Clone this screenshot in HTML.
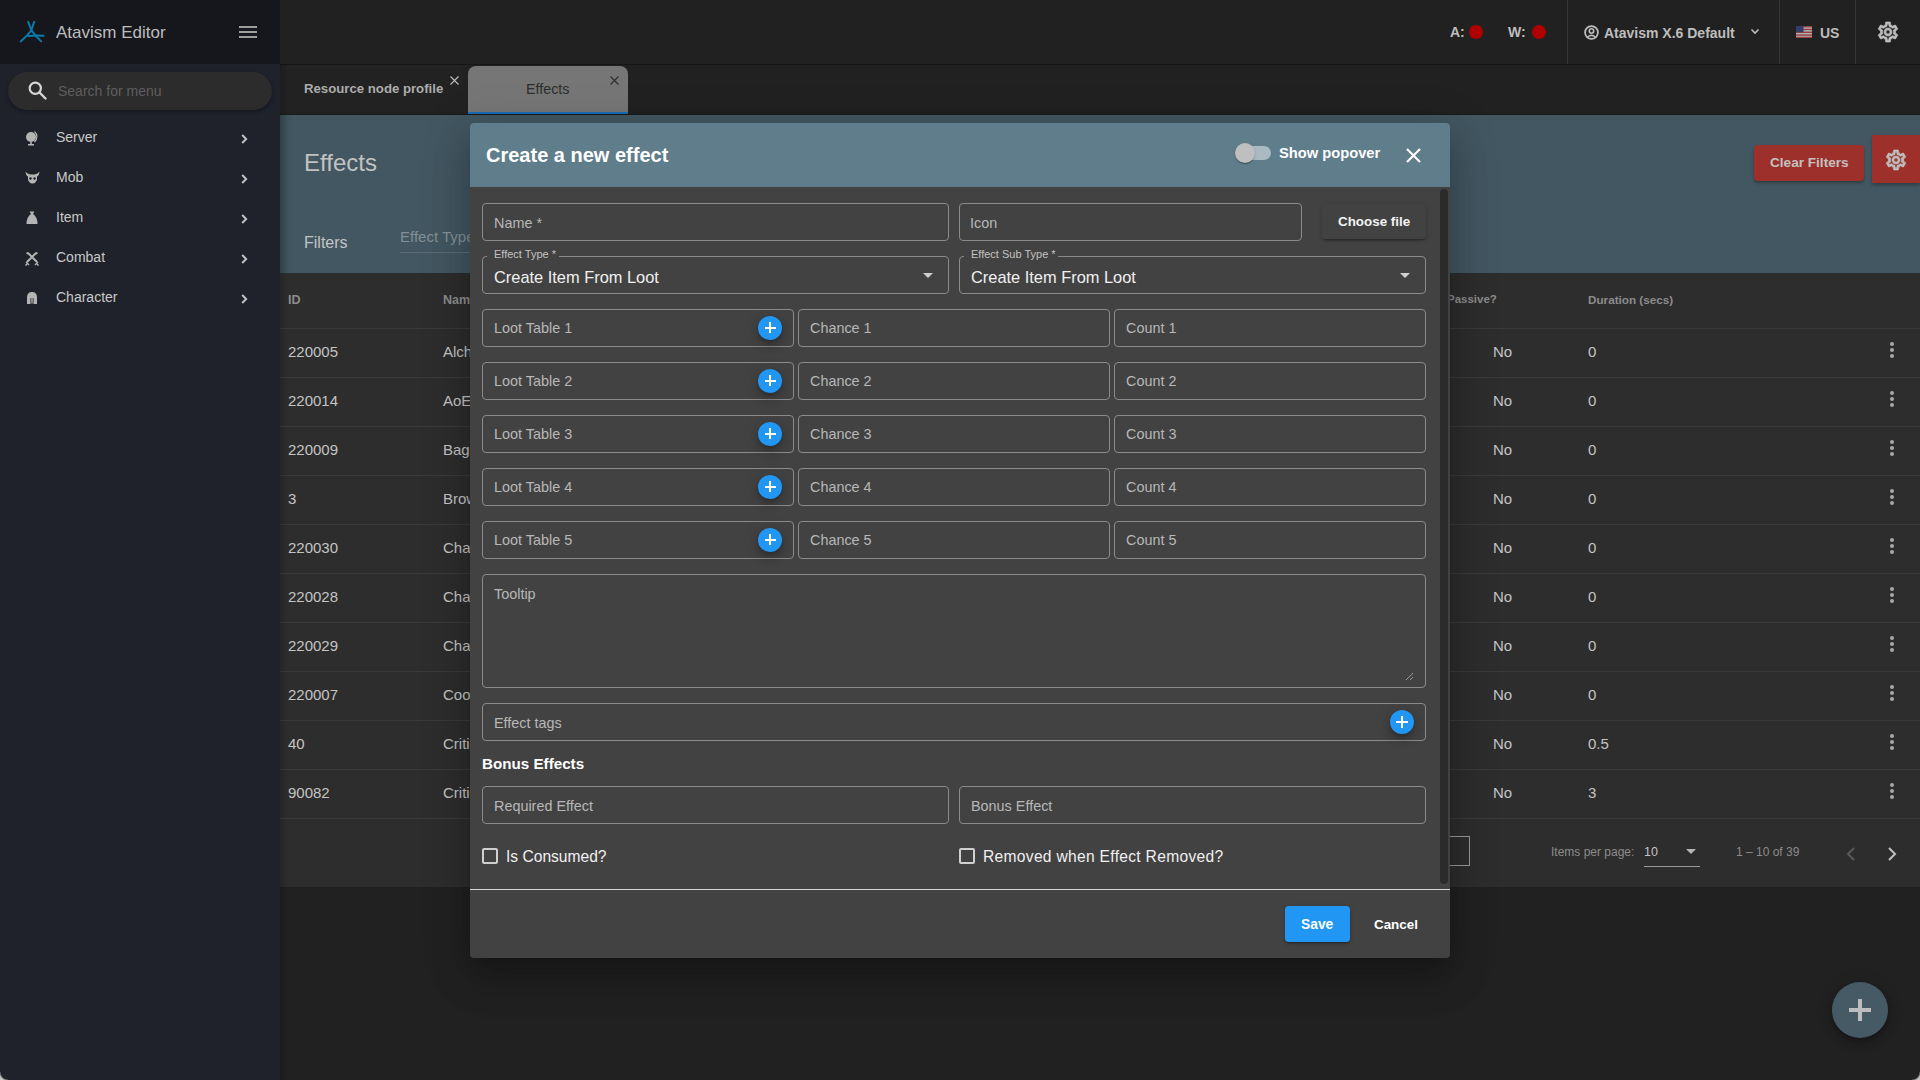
<!DOCTYPE html>
<html><head><meta charset="utf-8">
<style>
*{box-sizing:border-box;margin:0;padding:0}
html,body{width:1920px;height:1080px;overflow:hidden;background:#212121;font-family:"Liberation Sans",sans-serif}
.a{position:absolute}
.t{position:absolute;white-space:nowrap;line-height:1}
#sb{left:0;top:0;width:280px;height:1080px;background:#1f222b}
#sbh{left:0;top:0;width:280px;height:64px;background:#16171d}
#hdr{left:280px;top:0;width:1640px;height:65px;background:#212121;border-bottom:1px solid #161616}
#tabs{left:280px;top:65px;width:1640px;height:50px;background:#212121;border-bottom:1px solid #1a1a1a}
#ch{left:280px;top:115px;width:1640px;height:158px;background:linear-gradient(90deg,#3b4e57 0px,#425761 14px,#425761 100%)}
#tbl{left:280px;top:273px;width:1640px;height:614px;background:#2d2d2d}
.rl{position:absolute;left:280px;width:1640px;height:1px;background:#393939}
.cell{position:absolute;font-size:15px;color:#c4c4c4;line-height:1;white-space:nowrap}
.keb{position:absolute;width:4px;height:4px;border-radius:50%;background:#a8a8a8}
.sep{position:absolute;top:0;width:1px;height:64px;background:#363636}
.mi{position:absolute;left:56px;font-size:14px;color:#c9c9c9;line-height:1;white-space:nowrap}
.chev{position:absolute;left:240px;width:7px;height:7px;border-right:2px solid #c0c0c0;border-top:2px solid #c0c0c0;transform:rotate(45deg)}
.ico{position:absolute;left:25px}
</style></head><body>
<!-- SIDEBAR -->
<div id="sb" class="a"></div>
<div id="sbh" class="a"></div>
<svg class="a" style="left:16px;top:17px" width="32" height="28" viewBox="0 0 32 28">
  <g stroke="#0a7bab" stroke-width="2" fill="none" stroke-linecap="round" stroke-linejoin="round">
  <path d="M12.2 4.9 L15.3 13"/>
  <path d="M18.2 4.9 L15.3 13 L19.7 18.9 L25.2 24.4"/>
  <path d="M15.3 13.5 Q11 19 4.7 24.4"/>
  <path d="M12.2 18.9 Q20 18.2 27.5 18.7"/>
  </g>
</svg>
<div class="t" style="left:56px;top:24px;font-size:17px;color:#bdbdbd">Atavism Editor</div>
<div class="a" style="left:239px;top:26px;width:18px;height:2px;background:#9e9e9e"></div>
<div class="a" style="left:239px;top:31px;width:18px;height:2px;background:#9e9e9e"></div>
<div class="a" style="left:239px;top:36px;width:18px;height:2px;background:#9e9e9e"></div>

<div class="a" style="left:8px;top:72px;width:264px;height:38px;border-radius:19px;background:#2c2c2c;box-shadow:0 2px 4px rgba(0,0,0,.35)"></div>
<svg class="a" style="left:28px;top:81px" width="19" height="19" viewBox="0 0 19 19">
  <circle cx="7.3" cy="7.3" r="5.6" stroke="#d6d6d6" stroke-width="2.2" fill="none"/>
  <path d="M11.5 11.5 L17.5 17.5" stroke="#d6d6d6" stroke-width="2.4" stroke-linecap="round"/>
</svg>
<div class="t" style="left:58px;top:84px;font-size:14px;color:#5e5e5e">Search for menu</div>

<!-- menu icons -->
<svg class="ico" style="top:131px" width="14" height="15" viewBox="0 0 14 15"><circle cx="6" cy="6" r="5" fill="#b4b4b4"/><path d="M9.5 0.5 A7 7 0 0 1 9.5 11" stroke="#b4b4b4" stroke-width="1.2" fill="none"/><rect x="5.2" y="11" width="1.6" height="2" fill="#b4b4b4"/><rect x="3" y="13" width="6" height="1.5" fill="#b4b4b4"/></svg>
<svg class="ico" style="top:171px" width="15" height="13" viewBox="0 0 15 13"><path d="M0.5 0.5 Q1 5 3 5.5 L3 9 Q5 13 7.5 12.5 Q10 13 12 9 L12 5.5 Q14 5 14.5 0.5 Q12 4 7.5 3.5 Q3 4 0.5 0.5Z" fill="#b4b4b4"/><circle cx="5.5" cy="7.5" r="1.2" fill="#1e2029"/><circle cx="9.5" cy="7.5" r="1.2" fill="#1e2029"/></svg>
<svg class="ico" style="top:211px" width="14" height="14" viewBox="0 0 14 14"><path d="M4.5 0.5 L9.5 0.5 L8 3 Q12.5 6 12.5 13 L1.5 13 Q1.5 6 6 3Z" fill="#b4b4b4"/></svg>
<svg class="ico" style="top:252px" width="14" height="14" viewBox="0 0 14 14"><path d="M1.5 1 L3.5 1.5 L12 10 M12.5 1 L10.5 1.5 L2 10" stroke="#b4b4b4" stroke-width="2" fill="none"/><path d="M1 10 L4 13 M13 10 L10 13" stroke="#b4b4b4" stroke-width="1.5"/><path d="M0.5 13.5 L2 12 M13.5 13.5 L12 12" stroke="#b4b4b4" stroke-width="1.5"/></svg>
<svg class="ico" style="left:27px;top:292px" width="10" height="12" viewBox="0 0 10 12"><path d="M5 0 Q10 0 10 5.5 L10 12 L6.5 12 L6.5 6 L3.5 6 L3.5 12 L0 12 L0 5.5 Q0 0 5 0Z" fill="#b4b4b4"/><rect x="4.3" y="5.5" width="1.4" height="6" fill="#b4b4b4"/></svg>

<div class="mi" style="top:130px">Server</div>
<div class="mi" style="top:170px">Mob</div>
<div class="mi" style="top:210px">Item</div>
<div class="mi" style="top:250px">Combat</div>
<div class="mi" style="top:290px">Character</div>
<svg class="a" style="left:241px;top:134px" width="7" height="10" viewBox="0 0 7 10"><path d="M1.2 1 L5.2 5 L1.2 9" stroke="#c4c4c4" stroke-width="1.9" fill="none"/></svg>
<svg class="a" style="left:241px;top:174px" width="7" height="10" viewBox="0 0 7 10"><path d="M1.2 1 L5.2 5 L1.2 9" stroke="#c4c4c4" stroke-width="1.9" fill="none"/></svg>
<svg class="a" style="left:241px;top:214px" width="7" height="10" viewBox="0 0 7 10"><path d="M1.2 1 L5.2 5 L1.2 9" stroke="#c4c4c4" stroke-width="1.9" fill="none"/></svg>
<svg class="a" style="left:241px;top:254px" width="7" height="10" viewBox="0 0 7 10"><path d="M1.2 1 L5.2 5 L1.2 9" stroke="#c4c4c4" stroke-width="1.9" fill="none"/></svg>
<svg class="a" style="left:241px;top:294px" width="7" height="10" viewBox="0 0 7 10"><path d="M1.2 1 L5.2 5 L1.2 9" stroke="#c4c4c4" stroke-width="1.9" fill="none"/></svg>

<!-- HEADER -->
<div id="hdr" class="a"></div>
<div class="t" style="left:1450px;top:25px;font-size:14px;font-weight:700;color:#bdbdbd">A:</div>
<div class="a" style="left:1469px;top:25px;width:14px;height:14px;border-radius:50%;background:#b10000"></div>
<div class="t" style="left:1508px;top:25px;font-size:14px;font-weight:700;color:#bdbdbd">W:</div>
<div class="a" style="left:1532px;top:25px;width:14px;height:14px;border-radius:50%;background:#b10000"></div>
<div class="sep" style="left:1567px"></div>
<svg class="a" style="left:1584px;top:25px" width="15" height="15" viewBox="0 0 15 15"><circle cx="7.5" cy="7.5" r="6.4" stroke="#bdbdbd" stroke-width="1.8" fill="none"/><circle cx="7.5" cy="6" r="2.2" stroke="#bdbdbd" stroke-width="1.6" fill="none"/><path d="M3.6 12 Q7.5 8.8 11.4 12" stroke="#bdbdbd" stroke-width="1.6" fill="none"/></svg>
<div class="t" style="left:1604px;top:26px;font-size:14px;font-weight:700;color:#bdbdbd">Atavism X.6 Default</div>
<svg class="a" style="left:1750px;top:28px" width="10" height="7" viewBox="0 0 10 7"><path d="M1.5 1.5 L5 5 L8.5 1.5" stroke="#bdbdbd" stroke-width="1.6" fill="none"/></svg>
<div class="sep" style="left:1779px"></div>
<svg class="a" style="left:1796px;top:26px" width="16" height="12" viewBox="0 0 16 12"><rect width="16" height="12" fill="#b0b0b0"/><rect y="0" width="16" height="1.4" fill="#9a4040"/><rect y="2.8" width="16" height="1.4" fill="#9a4040"/><rect y="5.6" width="16" height="1.4" fill="#9a4040"/><rect y="8.4" width="16" height="1.4" fill="#9a4040"/><rect y="10.8" width="16" height="1.2" fill="#9a4040"/><rect width="7.5" height="6.2" fill="#343c6a"/></svg>
<div class="t" style="left:1820px;top:26px;font-size:14px;font-weight:700;color:#bdbdbd">US</div>
<div class="sep" style="left:1855px"></div>
<svg class="a" style="left:1876px;top:19.5px" width="24" height="24" viewBox="0 0 24 24"><path fill="#bdbdbd" stroke="#bdbdbd" stroke-width="0.7" d="M19.43 12.98c.04-.32.07-.64.07-.98 0-.34-.03-.66-.07-.98l2.11-1.65c.19-.15.24-.42.12-.64l-2-3.46c-.09-.16-.26-.25-.44-.25-.06 0-.12.01-.17.03l-2.49 1c-.52-.4-1.08-.73-1.69-.98l-.38-2.65C14.46 2.18 14.25 2 14 2h-4c-.25 0-.46.18-.49.42l-.38 2.65c-.61.25-1.17.59-1.69.98l-2.49-1c-.06-.02-.12-.03-.18-.03-.17 0-.34.09-.43.25l-2 3.46c-.13.22-.07.49.12.64l2.11 1.650c-.04.32-.07.65-.07.98 0 .33.03.66.07.98l-2.11 1.65c-.19.15-.24.42-.12.64l2 3.46c.09.16.26.25.44.25.06 0 .12-.01.17-.03l2.49-1c.52.4 1.08.73 1.69.98l.38 2.65c.03.24.24.42.49.42h4c.25 0 .46-.18.49-.42l.38-2.65c.61-.25 1.17-.59 1.69-.98l2.49 1c.06.02.12.03.18.03.17 0 .34-.09.43-.25l2-3.46c.12-.22.07-.49-.12-.64l-2.11-1.65zm-1.98-1.71c.04.31.05.52.05.73 0 .21-.02.43-.05.73l-.14 1.13.89.7 1.08.84-.7 1.21-1.27-.51-1.04-.42-.9.68c-.43.32-.84.56-1.25.73l-1.06.43-.16 1.13-.2 1.35h-1.4l-.19-1.35-.16-1.13-1.06-.43c-.43-.18-.83-.41-1.23-.71l-.91-.7-1.06.43-1.27.51-.7-1.21 1.08-.84.89-.7-.14-1.13c-.03-.31-.05-.54-.05-.74s.02-.43.05-.73l.14-1.13-.89-.7-1.08-.84.7-1.21 1.27.51 1.04.42.9-.68c.43-.32.84-.56 1.250-.73l1.06-.43.16-1.13.2-1.35h1.39l.19 1.35.16 1.13 1.06.43c.43.18.83.41 1.23.71l.91.7 1.06-.43 1.27-.51.7 1.21-1.07.85-.89.7.14 1.13zM12 8c-2.21 0-4 1.79-4 4s1.79 4 4 4 4-1.79 4-4-1.79-4-4-4zm0 6c-1.1 0-2-.9-2-2s.9-2 2-2 2 .9 2 2-.9 2-2 2z"/></svg>

<!-- TABS -->
<div id="tabs" class="a"></div>
<div class="a" style="left:280px;top:66px;width:187px;height:47px;background:#222222;border-radius:8px 8px 0 0;box-shadow:inset 1px 1px 0 rgba(255,255,255,.02)"></div>
<div class="t" style="left:304px;top:82px;font-size:13.2px;font-weight:700;color:#acacac">Resource node profile</div>
<svg class="a" style="left:450px;top:76px" width="9" height="9" viewBox="0 0 9 9"><path d="M0.5 0.5 L8.5 8.5 M8.5 0.5 L0.5 8.5" stroke="#bbb" stroke-width="1.1"/></svg>
<div class="a" style="left:468px;top:66px;width:160px;height:48px;background:#767676;border-radius:8px 8px 0 0;border-bottom:2px solid #1a6cb5"></div>
<div class="t" style="left:526px;top:82px;font-size:14.3px;color:#2e2e2e">Effects</div>
<svg class="a" style="left:610px;top:76px" width="9" height="9" viewBox="0 0 9 9"><path d="M0.5 0.5 L8.5 8.5 M8.5 0.5 L0.5 8.5" stroke="#2e2e2e" stroke-width="1.1"/></svg>

<!-- CONTENT HEADER -->
<div id="ch" class="a"></div>
<div class="t" style="left:304px;top:151px;font-size:24px;color:#c2c2c2">Effects</div>
<div class="t" style="left:304px;top:235px;font-size:16px;color:#c4c4c4">Filters</div>
<div class="t" style="left:400px;top:229px;font-size:15px;color:#838f95">Effect Type</div>
<div class="a" style="left:400px;top:252px;width:200px;height:1px;background:#5c6c74"></div>
<div class="a" style="left:1754px;top:145px;width:110px;height:36px;border-radius:4px;background:#9d302a;box-shadow:0 2px 3px rgba(0,0,0,.3)"></div>
<div class="t" style="left:1770px;top:156px;font-size:13.6px;font-weight:700;color:#c2c2c2">Clear Filters</div>
<div class="a" style="left:1872px;top:135px;width:48px;height:48px;background:#9d302a;box-shadow:0 2px 3px rgba(0,0,0,.3)"></div>
<svg class="a" style="left:1884px;top:147.5px" width="24" height="24" viewBox="0 0 24 24"><path fill="#bdbdbd" stroke="#bdbdbd" stroke-width="0.7" d="M19.43 12.98c.04-.32.07-.64.07-.98 0-.34-.03-.66-.07-.98l2.11-1.65c.19-.15.24-.42.12-.64l-2-3.46c-.09-.16-.26-.25-.44-.25-.06 0-.12.01-.17.03l-2.49 1c-.52-.4-1.08-.73-1.69-.98l-.38-2.65C14.46 2.18 14.25 2 14 2h-4c-.25 0-.46.18-.49.42l-.38 2.65c-.61.25-1.17.59-1.69.98l-2.49-1c-.06-.02-.12-.03-.18-.03-.17 0-.34.09-.43.25l-2 3.46c-.13.22-.07.49.12.64l2.11 1.650c-.04.32-.07.65-.07.98 0 .33.03.66.07.98l-2.11 1.65c-.19.15-.24.42-.12.64l2 3.46c.09.16.26.25.44.25.06 0 .12-.01.17-.03l2.49-1c.52.4 1.08.73 1.69.98l.38 2.65c.03.24.24.42.49.42h4c.25 0 .46-.18.49-.42l.38-2.65c.61-.25 1.17-.59 1.69-.98l2.49 1c.06.02.12.03.18.03.17 0 .34-.09.43-.25l2-3.46c.12-.22.07-.49-.12-.64l-2.11-1.65zm-1.98-1.71c.04.31.05.52.05.73 0 .21-.02.43-.05.73l-.14 1.13.89.7 1.08.84-.7 1.21-1.27-.51-1.04-.42-.9.68c-.43.32-.84.56-1.25.73l-1.06.43-.16 1.13-.2 1.35h-1.4l-.19-1.35-.16-1.13-1.06-.43c-.43-.18-.83-.41-1.23-.71l-.91-.7-1.06.43-1.27.51-.7-1.21 1.08-.84.89-.7-.14-1.13c-.03-.31-.05-.54-.05-.74s.02-.43.05-.73l.14-1.13-.89-.7-1.08-.84.7-1.21 1.27.51 1.04.42.9-.68c.43-.32.84-.56 1.250-.73l1.06-.43.16-1.13.2-1.35h1.39l.19 1.35.16 1.13 1.06.43c.43.18.83.41 1.23.71l.91.7 1.06-.43 1.27-.51.7 1.21-1.07.85-.89.7.14 1.13zM12 8c-2.21 0-4 1.79-4 4s1.79 4 4 4 4-1.79 4-4-1.79-4-4-4zm0 6c-1.1 0-2-.9-2-2s.9-2 2-2 2 .9 2 2-.9 2-2 2z"/></svg>

<!-- TABLE -->
<div id="tbl" class="a"></div>
<div class="t" style="left:288px;top:294px;font-size:12.5px;font-weight:700;color:#8c8c8c">ID</div>
<div class="t" style="left:443px;top:294px;font-size:12.5px;font-weight:700;color:#8c8c8c">Name</div>
<div class="t" style="left:1447px;top:294px;font-size:11.5px;font-weight:700;color:#8c8c8c">Passive?</div>
<div class="t" style="left:1588px;top:294px;font-size:11.7px;font-weight:700;color:#8c8c8c">Duration (secs)</div>
<div class="rl" style="top:328px"></div>
<div class="cell" style="left:288px;top:344px">220005</div>
<div class="cell" style="left:443px;top:344px">Alchemy</div>
<div class="cell" style="left:1493px;top:344px">No</div>
<div class="cell" style="left:1588px;top:344px">0</div>
<div class="keb" style="left:1890px;top:342px"></div>
<div class="keb" style="left:1890px;top:348px"></div>
<div class="keb" style="left:1890px;top:354px"></div>
<div class="rl" style="top:377px"></div>
<div class="cell" style="left:288px;top:393px">220014</div>
<div class="cell" style="left:443px;top:393px">AoE Damage</div>
<div class="cell" style="left:1493px;top:393px">No</div>
<div class="cell" style="left:1588px;top:393px">0</div>
<div class="keb" style="left:1890px;top:391px"></div>
<div class="keb" style="left:1890px;top:397px"></div>
<div class="keb" style="left:1890px;top:403px"></div>
<div class="rl" style="top:426px"></div>
<div class="cell" style="left:288px;top:442px">220009</div>
<div class="cell" style="left:443px;top:442px">Bag Effect</div>
<div class="cell" style="left:1493px;top:442px">No</div>
<div class="cell" style="left:1588px;top:442px">0</div>
<div class="keb" style="left:1890px;top:440px"></div>
<div class="keb" style="left:1890px;top:446px"></div>
<div class="keb" style="left:1890px;top:452px"></div>
<div class="rl" style="top:475px"></div>
<div class="cell" style="left:288px;top:491px">3</div>
<div class="cell" style="left:443px;top:491px">Brown</div>
<div class="cell" style="left:1493px;top:491px">No</div>
<div class="cell" style="left:1588px;top:491px">0</div>
<div class="keb" style="left:1890px;top:489px"></div>
<div class="keb" style="left:1890px;top:495px"></div>
<div class="keb" style="left:1890px;top:501px"></div>
<div class="rl" style="top:524px"></div>
<div class="cell" style="left:288px;top:540px">220030</div>
<div class="cell" style="left:443px;top:540px">Chance</div>
<div class="cell" style="left:1493px;top:540px">No</div>
<div class="cell" style="left:1588px;top:540px">0</div>
<div class="keb" style="left:1890px;top:538px"></div>
<div class="keb" style="left:1890px;top:544px"></div>
<div class="keb" style="left:1890px;top:550px"></div>
<div class="rl" style="top:573px"></div>
<div class="cell" style="left:288px;top:589px">220028</div>
<div class="cell" style="left:443px;top:589px">Change</div>
<div class="cell" style="left:1493px;top:589px">No</div>
<div class="cell" style="left:1588px;top:589px">0</div>
<div class="keb" style="left:1890px;top:587px"></div>
<div class="keb" style="left:1890px;top:593px"></div>
<div class="keb" style="left:1890px;top:599px"></div>
<div class="rl" style="top:622px"></div>
<div class="cell" style="left:288px;top:638px">220029</div>
<div class="cell" style="left:443px;top:638px">Change</div>
<div class="cell" style="left:1493px;top:638px">No</div>
<div class="cell" style="left:1588px;top:638px">0</div>
<div class="keb" style="left:1890px;top:636px"></div>
<div class="keb" style="left:1890px;top:642px"></div>
<div class="keb" style="left:1890px;top:648px"></div>
<div class="rl" style="top:671px"></div>
<div class="cell" style="left:288px;top:687px">220007</div>
<div class="cell" style="left:443px;top:687px">Cooldown</div>
<div class="cell" style="left:1493px;top:687px">No</div>
<div class="cell" style="left:1588px;top:687px">0</div>
<div class="keb" style="left:1890px;top:685px"></div>
<div class="keb" style="left:1890px;top:691px"></div>
<div class="keb" style="left:1890px;top:697px"></div>
<div class="rl" style="top:720px"></div>
<div class="cell" style="left:288px;top:736px">40</div>
<div class="cell" style="left:443px;top:736px">Critical</div>
<div class="cell" style="left:1493px;top:736px">No</div>
<div class="cell" style="left:1588px;top:736px">0.5</div>
<div class="keb" style="left:1890px;top:734px"></div>
<div class="keb" style="left:1890px;top:740px"></div>
<div class="keb" style="left:1890px;top:746px"></div>
<div class="rl" style="top:769px"></div>
<div class="cell" style="left:288px;top:785px">90082</div>
<div class="cell" style="left:443px;top:785px">Critical</div>
<div class="cell" style="left:1493px;top:785px">No</div>
<div class="cell" style="left:1588px;top:785px">3</div>
<div class="keb" style="left:1890px;top:783px"></div>
<div class="keb" style="left:1890px;top:789px"></div>
<div class="keb" style="left:1890px;top:795px"></div>
<div class="rl" style="top:818px"></div>
<div class="a" style="left:1420px;top:836px;width:50px;height:30px;border:1px solid #9a9a9a"></div>
<div class="t" style="left:1551px;top:846px;font-size:12px;color:#8c8c8c">Items per page:</div>
<div class="t" style="left:1644px;top:846px;font-size:12.5px;color:#c4c4c4">10</div>
<div class="a" style="left:1686px;top:849px;width:0;height:0;border-left:5px solid transparent;border-right:5px solid transparent;border-top:5px solid #b5b5b5"></div>
<div class="a" style="left:1644px;top:866px;width:56px;height:1px;background:#9a9a9a"></div>
<div class="t" style="left:1736px;top:846px;font-size:12px;color:#8c8c8c">1 – 10 of 39</div>
<svg class="a" style="left:1846px;top:847px" width="10" height="14" viewBox="0 0 10 14"><path d="M8 1 L2 7 L8 13" stroke="#5a5a5a" stroke-width="2" fill="none"/></svg>
<svg class="a" style="left:1887px;top:847px" width="10" height="14" viewBox="0 0 10 14"><path d="M2 1 L8 7 L2 13" stroke="#c0c0c0" stroke-width="2" fill="none"/></svg>
<div class="a" style="left:1832px;top:982px;width:56px;height:56px;border-radius:50%;background:#455a64;box-shadow:0 3px 5px -1px rgba(0,0,0,.2),0 6px 10px 0 rgba(0,0,0,.14),0 1px 18px 0 rgba(0,0,0,.12)"></div>
<div class="a" style="left:1849px;top:1008px;width:22px;height:3.5px;background:#bdbdbd"></div>
<div class="a" style="left:1858px;top:999px;width:3.5px;height:22px;background:#bdbdbd"></div>

<div class="a" style="left:280px;top:64px;width:8px;height:1016px;background:linear-gradient(90deg,rgba(0,0,0,.18),rgba(0,0,0,0))"></div>
<div class="a" style="left:470px;top:123px;width:980px;height:835px;background:#424242;border-radius:4px;box-shadow:0 11px 15px -7px rgba(0,0,0,.2),0 24px 38px 3px rgba(0,0,0,.14),0 9px 46px 8px rgba(0,0,0,.12)"></div>
<div class="a" style="left:470px;top:123px;width:980px;height:64px;background:#607d8b;border-radius:4px 4px 0 0"></div>
<div class="t" style="left:486px;top:145px;font-size:20px;font-weight:700;color:#fff">Create a new effect</div>
<div class="a" style="left:1237px;top:146px;width:34px;height:14px;border-radius:7px;background:#a9bac2"></div>
<div class="a" style="left:1235px;top:143px;width:20px;height:20px;border-radius:50%;background:#bfbfbf;box-shadow:0 2px 1px -1px rgba(0,0,0,.2),0 1px 1px 0 rgba(0,0,0,.14),0 1px 3px 0 rgba(0,0,0,.12)"></div>
<div class="t" style="left:1279px;top:146px;font-size:14.7px;font-weight:700;color:#fff">Show popover</div>
<svg class="a" style="left:1406px;top:148px" width="15" height="15" viewBox="0 0 15 15"><path d="M1 1 L14 14 M14 1 L1 14" stroke="#fff" stroke-width="2.2"/></svg>
<div class="a" style="left:1440px;top:189px;width:8px;height:695px;border-radius:4px;background:#2b2b2b"></div>
<div class="a" style="left:482px;top:203px;width:467px;height:38px;border:1px solid #8b8b8b;border-radius:4px"></div>
<div class="t" style="left:494px;top:216px;font-size:14.4px;color:#b8b8b8">Name *</div>
<div class="a" style="left:959px;top:203px;width:343px;height:38px;border:1px solid #8b8b8b;border-radius:4px"></div>
<div class="t" style="left:970px;top:216px;font-size:14.4px;color:#b8b8b8">Icon</div>
<div class="a" style="left:1322px;top:204px;width:104px;height:35px;border-radius:4px;background:#424242;box-shadow:0 3px 1px -2px rgba(0,0,0,.2),0 2px 2px 0 rgba(0,0,0,.14),0 1px 5px 0 rgba(0,0,0,.12)"></div>
<div class="t" style="left:1338px;top:215px;font-size:13.4px;font-weight:700;color:#f2f2f2">Choose file</div>
<div class="a" style="left:482px;top:256px;width:467px;height:38px;border:1px solid #8b8b8b;border-radius:4px"></div>
<div class="a" style="left:487px;top:254px;width:72px;height:4px;background:#424242"></div>
<div class="t" style="left:494px;top:249px;font-size:11px;color:#c2c2c2">Effect Type *</div>
<div class="t" style="left:494px;top:269px;font-size:16.4px;color:#f0f0f0">Create Item From Loot</div>
<div class="a" style="left:923px;top:273px;width:0;height:0;border-left:5px solid transparent;border-right:5px solid transparent;border-top:5px solid #d0d0d0"></div>
<div class="a" style="left:959px;top:256px;width:467px;height:38px;border:1px solid #8b8b8b;border-radius:4px"></div>
<div class="a" style="left:964px;top:254px;width:94px;height:4px;background:#424242"></div>
<div class="t" style="left:971px;top:249px;font-size:11px;color:#c2c2c2">Effect Sub Type *</div>
<div class="t" style="left:971px;top:269px;font-size:16.4px;color:#f0f0f0">Create Item From Loot</div>
<div class="a" style="left:1400px;top:273px;width:0;height:0;border-left:5px solid transparent;border-right:5px solid transparent;border-top:5px solid #d0d0d0"></div>
<div class="a" style="left:482px;top:309px;width:312px;height:38px;border:1px solid #8b8b8b;border-radius:4px"></div>
<div class="t" style="left:494px;top:321px;font-size:14.4px;color:#b8b8b8">Loot Table 1</div>
<div class="a" style="left:758px;top:316px;width:24px;height:24px;border-radius:50%;background:#2196f3;box-shadow:0 3px 5px -1px rgba(0,0,0,.2),0 6px 10px 0 rgba(0,0,0,.14),0 1px 18px 0 rgba(0,0,0,.12)"></div>
<div class="a" style="left:764.5px;top:327px;width:11px;height:2px;background:#fff"></div>
<div class="a" style="left:769px;top:321.5px;width:2px;height:11px;background:#fff"></div>
<div class="a" style="left:798px;top:309px;width:312px;height:38px;border:1px solid #8b8b8b;border-radius:4px"></div>
<div class="t" style="left:810px;top:321px;font-size:14.4px;color:#b8b8b8">Chance 1</div>
<div class="a" style="left:1114px;top:309px;width:312px;height:38px;border:1px solid #8b8b8b;border-radius:4px"></div>
<div class="t" style="left:1126px;top:321px;font-size:14.4px;color:#b8b8b8">Count 1</div>
<div class="a" style="left:482px;top:362px;width:312px;height:38px;border:1px solid #8b8b8b;border-radius:4px"></div>
<div class="t" style="left:494px;top:374px;font-size:14.4px;color:#b8b8b8">Loot Table 2</div>
<div class="a" style="left:758px;top:369px;width:24px;height:24px;border-radius:50%;background:#2196f3;box-shadow:0 3px 5px -1px rgba(0,0,0,.2),0 6px 10px 0 rgba(0,0,0,.14),0 1px 18px 0 rgba(0,0,0,.12)"></div>
<div class="a" style="left:764.5px;top:380px;width:11px;height:2px;background:#fff"></div>
<div class="a" style="left:769px;top:374.5px;width:2px;height:11px;background:#fff"></div>
<div class="a" style="left:798px;top:362px;width:312px;height:38px;border:1px solid #8b8b8b;border-radius:4px"></div>
<div class="t" style="left:810px;top:374px;font-size:14.4px;color:#b8b8b8">Chance 2</div>
<div class="a" style="left:1114px;top:362px;width:312px;height:38px;border:1px solid #8b8b8b;border-radius:4px"></div>
<div class="t" style="left:1126px;top:374px;font-size:14.4px;color:#b8b8b8">Count 2</div>
<div class="a" style="left:482px;top:415px;width:312px;height:38px;border:1px solid #8b8b8b;border-radius:4px"></div>
<div class="t" style="left:494px;top:427px;font-size:14.4px;color:#b8b8b8">Loot Table 3</div>
<div class="a" style="left:758px;top:422px;width:24px;height:24px;border-radius:50%;background:#2196f3;box-shadow:0 3px 5px -1px rgba(0,0,0,.2),0 6px 10px 0 rgba(0,0,0,.14),0 1px 18px 0 rgba(0,0,0,.12)"></div>
<div class="a" style="left:764.5px;top:433px;width:11px;height:2px;background:#fff"></div>
<div class="a" style="left:769px;top:427.5px;width:2px;height:11px;background:#fff"></div>
<div class="a" style="left:798px;top:415px;width:312px;height:38px;border:1px solid #8b8b8b;border-radius:4px"></div>
<div class="t" style="left:810px;top:427px;font-size:14.4px;color:#b8b8b8">Chance 3</div>
<div class="a" style="left:1114px;top:415px;width:312px;height:38px;border:1px solid #8b8b8b;border-radius:4px"></div>
<div class="t" style="left:1126px;top:427px;font-size:14.4px;color:#b8b8b8">Count 3</div>
<div class="a" style="left:482px;top:468px;width:312px;height:38px;border:1px solid #8b8b8b;border-radius:4px"></div>
<div class="t" style="left:494px;top:480px;font-size:14.4px;color:#b8b8b8">Loot Table 4</div>
<div class="a" style="left:758px;top:475px;width:24px;height:24px;border-radius:50%;background:#2196f3;box-shadow:0 3px 5px -1px rgba(0,0,0,.2),0 6px 10px 0 rgba(0,0,0,.14),0 1px 18px 0 rgba(0,0,0,.12)"></div>
<div class="a" style="left:764.5px;top:486px;width:11px;height:2px;background:#fff"></div>
<div class="a" style="left:769px;top:480.5px;width:2px;height:11px;background:#fff"></div>
<div class="a" style="left:798px;top:468px;width:312px;height:38px;border:1px solid #8b8b8b;border-radius:4px"></div>
<div class="t" style="left:810px;top:480px;font-size:14.4px;color:#b8b8b8">Chance 4</div>
<div class="a" style="left:1114px;top:468px;width:312px;height:38px;border:1px solid #8b8b8b;border-radius:4px"></div>
<div class="t" style="left:1126px;top:480px;font-size:14.4px;color:#b8b8b8">Count 4</div>
<div class="a" style="left:482px;top:521px;width:312px;height:38px;border:1px solid #8b8b8b;border-radius:4px"></div>
<div class="t" style="left:494px;top:533px;font-size:14.4px;color:#b8b8b8">Loot Table 5</div>
<div class="a" style="left:758px;top:528px;width:24px;height:24px;border-radius:50%;background:#2196f3;box-shadow:0 3px 5px -1px rgba(0,0,0,.2),0 6px 10px 0 rgba(0,0,0,.14),0 1px 18px 0 rgba(0,0,0,.12)"></div>
<div class="a" style="left:764.5px;top:539px;width:11px;height:2px;background:#fff"></div>
<div class="a" style="left:769px;top:533.5px;width:2px;height:11px;background:#fff"></div>
<div class="a" style="left:798px;top:521px;width:312px;height:38px;border:1px solid #8b8b8b;border-radius:4px"></div>
<div class="t" style="left:810px;top:533px;font-size:14.4px;color:#b8b8b8">Chance 5</div>
<div class="a" style="left:1114px;top:521px;width:312px;height:38px;border:1px solid #8b8b8b;border-radius:4px"></div>
<div class="t" style="left:1126px;top:533px;font-size:14.4px;color:#b8b8b8">Count 5</div>
<div class="a" style="left:482px;top:574px;width:944px;height:114px;border:1px solid #8b8b8b;border-radius:4px"></div>
<div class="t" style="left:494px;top:587px;font-size:14.4px;color:#b8b8b8">Tooltip</div>
<svg class="a" style="left:1404px;top:671px" width="10" height="10" viewBox="0 0 10 10"><path d="M9 2 L2 9 M9 6 L6 9" stroke="#9a9a9a" stroke-width="1"/></svg>
<div class="a" style="left:482px;top:703px;width:944px;height:38px;border:1px solid #8b8b8b;border-radius:4px"></div>
<div class="t" style="left:494px;top:716px;font-size:14.4px;color:#b8b8b8">Effect tags</div>
<div class="a" style="left:1390px;top:710px;width:24px;height:24px;border-radius:50%;background:#2196f3;box-shadow:0 3px 5px -1px rgba(0,0,0,.2),0 6px 10px 0 rgba(0,0,0,.14),0 1px 18px 0 rgba(0,0,0,.12)"></div>
<div class="a" style="left:1396px;top:721px;width:12px;height:2px;background:#fff"></div>
<div class="a" style="left:1401px;top:716px;width:2px;height:12px;background:#fff"></div>
<div class="t" style="left:482px;top:756px;font-size:15.2px;font-weight:700;color:#fff">Bonus Effects</div>
<div class="a" style="left:482px;top:786px;width:467px;height:38px;border:1px solid #8b8b8b;border-radius:4px"></div>
<div class="t" style="left:494px;top:799px;font-size:14.4px;color:#b8b8b8">Required Effect</div>
<div class="a" style="left:959px;top:786px;width:467px;height:38px;border:1px solid #8b8b8b;border-radius:4px"></div>
<div class="t" style="left:971px;top:799px;font-size:14.4px;color:#b8b8b8">Bonus Effect</div>
<div class="a" style="left:482px;top:848px;width:16px;height:16px;border:2px solid #cfcfcf;border-radius:2px"></div>
<div class="t" style="left:506px;top:849px;font-size:15.6px;color:#f0f0f0">Is Consumed?</div>
<div class="a" style="left:959px;top:848px;width:16px;height:16px;border:2px solid #cfcfcf;border-radius:2px"></div>
<div class="t" style="left:983px;top:849px;font-size:15.6px;letter-spacing:0.3px;color:#f0f0f0">Removed when Effect Removed?</div>
<div class="a" style="left:470px;top:889px;width:980px;height:1px;background:#d6d6d6"></div>
<div class="a" style="left:1285px;top:906px;width:65px;height:36px;border-radius:4px;background:#2196f3;box-shadow:0 3px 1px -2px rgba(0,0,0,.2),0 2px 2px 0 rgba(0,0,0,.14),0 1px 5px 0 rgba(0,0,0,.12)"></div>
<div class="t" style="left:1301px;top:918px;font-size:13.8px;font-weight:700;color:#fff">Save</div>
<div class="t" style="left:1374px;top:918px;font-size:13.4px;font-weight:700;color:#fff">Cancel</div>
<div class="a" style="left:0;top:1072px;width:8px;height:8px;background:radial-gradient(circle at 8px 0px,transparent 7px,#c6c6c6 9px)"></div>
<div class="a" style="left:1912px;top:1072px;width:8px;height:8px;background:radial-gradient(circle at 0px 0px,transparent 7px,#c6c6c6 9px)"></div>
</body></html>
